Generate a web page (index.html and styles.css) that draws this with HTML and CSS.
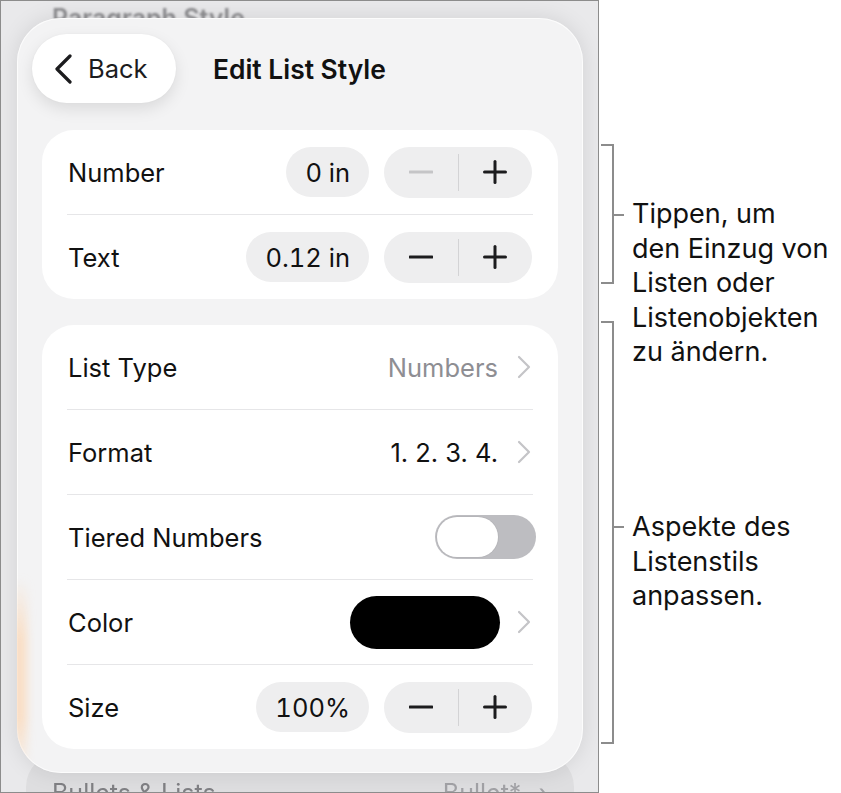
FILE: index.html
```html
<!DOCTYPE html>
<html lang="de">
<head>
<meta charset="utf-8">
<title>Edit List Style</title>
<link rel="stylesheet" href="styles.css">
</head>
<body>
<div class="page">
  <div class="device">
    <div class="bg-top">Paragraph Style</div>
    <div class="bg-sheet">
      <span class="bg-sheet-label">Bullets &amp; Lists</span>
      <span class="bg-sheet-value">Bullet* <span class="bg-chev">›</span></span>
    </div>

    <div class="panel">
      <div class="panel-glow"></div>
      <div class="header">
        <button class="back">
          <svg class="back-chev" width="20" height="30" viewBox="0 0 20 30"><polyline points="17,2 4,15 17,28" fill="none" stroke="#1c1c1e" stroke-width="3.2" stroke-linecap="round" stroke-linejoin="round"/></svg>
          <span>Back</span>
        </button>
        <h1 class="title">Edit List Style</h1>
      </div>

      <div class="card">
        <div class="row">
          <span class="label">Number</span>
          <div class="controls">
            <span class="value-pill">0 in</span>
            <div class="stepper">
              <span class="step"><svg width="24" height="24" viewBox="0 0 24 24"><line x1="1" y1="12" x2="23" y2="12" stroke="#c5c5c7" stroke-width="3" stroke-linecap="round"/></svg></span>
              <span class="step-div"></span>
              <span class="step"><svg width="24" height="24" viewBox="0 0 24 24"><line x1="1.5" y1="12" x2="22.5" y2="12" stroke="#1c1c1e" stroke-width="3" stroke-linecap="round"/><line x1="12" y1="1.5" x2="12" y2="22.5" stroke="#1c1c1e" stroke-width="3" stroke-linecap="round"/></svg></span>
            </div>
          </div>
        </div>
        <div class="row">
          <span class="label">Text</span>
          <div class="controls">
            <span class="value-pill">0.12 in</span>
            <div class="stepper">
              <span class="step"><svg width="24" height="24" viewBox="0 0 24 24"><line x1="1" y1="12" x2="23" y2="12" stroke="#1c1c1e" stroke-width="3" stroke-linecap="round"/></svg></span>
              <span class="step-div"></span>
              <span class="step"><svg width="24" height="24" viewBox="0 0 24 24"><line x1="1.5" y1="12" x2="22.5" y2="12" stroke="#1c1c1e" stroke-width="3" stroke-linecap="round"/><line x1="12" y1="1.5" x2="12" y2="22.5" stroke="#1c1c1e" stroke-width="3" stroke-linecap="round"/></svg></span>
            </div>
          </div>
        </div>
      </div>

      <div class="card card-2">
        <div class="row">
          <span class="label">List Type</span>
          <div class="controls">
            <span class="value muted">Numbers</span>
            <svg class="chev" width="14" height="24" viewBox="0 0 14 24"><polyline points="2,2 12,12 2,22" fill="none" stroke="#c4c4c7" stroke-width="2.2" stroke-linecap="round" stroke-linejoin="round"/></svg>
          </div>
        </div>
        <div class="row">
          <span class="label">Format</span>
          <div class="controls">
            <span class="value">1. 2. 3. 4.</span>
            <svg class="chev" width="14" height="24" viewBox="0 0 14 24"><polyline points="2,2 12,12 2,22" fill="none" stroke="#c4c4c7" stroke-width="2.2" stroke-linecap="round" stroke-linejoin="round"/></svg>
          </div>
        </div>
        <div class="row">
          <span class="label">Tiered Numbers</span>
          <div class="controls">
            <span class="toggle"><span class="knob"></span></span>
          </div>
        </div>
        <div class="row">
          <span class="label">Color</span>
          <div class="controls">
            <span class="swatch"></span>
            <svg class="chev chev-color" width="14" height="24" viewBox="0 0 14 24"><polyline points="2,2 12,12 2,22" fill="none" stroke="#c4c4c7" stroke-width="2.2" stroke-linecap="round" stroke-linejoin="round"/></svg>
          </div>
        </div>
        <div class="row">
          <span class="label">Size</span>
          <div class="controls">
            <span class="value-pill">100%</span>
            <div class="stepper">
              <span class="step"><svg width="24" height="24" viewBox="0 0 24 24"><line x1="1" y1="12" x2="23" y2="12" stroke="#1c1c1e" stroke-width="3" stroke-linecap="round"/></svg></span>
              <span class="step-div"></span>
              <span class="step"><svg width="24" height="24" viewBox="0 0 24 24"><line x1="1.5" y1="12" x2="22.5" y2="12" stroke="#1c1c1e" stroke-width="3" stroke-linecap="round"/><line x1="12" y1="1.5" x2="12" y2="22.5" stroke="#1c1c1e" stroke-width="3" stroke-linecap="round"/></svg></span>
            </div>
          </div>
        </div>
      </div>
    </div>
  </div>

  <div class="notes">
    <div class="note note-1">
      <span class="bracket"></span>
      <p class="note-text">Tippen, um<br>den Einzug von<br>Listen oder<br>Listenobjekten<br>zu ändern.</p>
    </div>
    <div class="note note-2">
      <span class="bracket"></span>
      <p class="note-text">Aspekte des<br>Listenstils<br>anpassen.</p>
    </div>
  </div>
</div>
</body>
</html>
```

FILE: styles.css
```css
* { box-sizing: border-box; }

html, body {
  margin: 0;
  padding: 0;
  background: #ffffff;
}

body {
  font-family: Inter, "Liberation Sans", Arial, sans-serif;
  color: #111111;
}

.page {
  display: flex;
  width: 841px;
  height: 793px;
  overflow: hidden;
}

.device {
  position: relative;
  width: 599px;
  height: 793px;
  flex: none;
  border: 1px solid #8c8c8c;
  background: #e9e9eb;
  overflow: hidden;
}

.bg-top {
  position: absolute;
  left: 51px;
  top: 2px;
  font-size: 25px;
  font-weight: 600;
  color: #8d8d90;
  filter: blur(0.8px);
}

.bg-sheet {
  position: absolute;
  left: 25px;
  right: 24px;
  top: 752px;
  height: 90px;
  border-radius: 34px;
  background: #dedee0;
  display: flex;
  justify-content: space-between;
  padding: 25px 26px 0 26px;
  font-size: 25px;
  color: #808084;
  filter: blur(0.6px);
}

.bg-sheet-value { color: #a2a2a6; }
.bg-chev { margin-left: 10px; }

.panel {
  position: absolute;
  left: 16px;
  top: 17px;
  width: 566px;
  height: 755px;
  border-radius: 44px;
  background: #f3f3f4;
  box-shadow: 0 0 22px rgba(0, 0, 0, 0.10), inset 0 0 0 1px rgba(255, 255, 255, 0.7);
  padding: 16px 25px 0 25px;
  overflow: hidden;
}

.panel-glow {
  position: absolute;
  left: -6px;
  top: 560px;
  width: 16px;
  height: 200px;
  background: linear-gradient(to bottom, rgba(255, 214, 170, 0), rgba(255, 206, 160, 0.55) 30%, rgba(255, 206, 160, 0.55) 70%, rgba(255, 214, 170, 0));
  filter: blur(4px);
}

.header {
  position: relative;
  display: flex;
  align-items: center;
  height: 69px;
  margin-left: -10px;
  margin-bottom: 27px;
}

.back {
  display: flex;
  align-items: center;
  gap: 15px;
  width: 144px;
  height: 69px;
  padding: 0 0 0 21px;
  border: none;
  border-radius: 35px;
  background: #ffffff;
  box-shadow: 0 6px 16px rgba(0, 0, 0, 0.10), 0 0 2px rgba(0, 0, 0, 0.04);
  font-family: inherit;
  font-size: 25.5px;
  color: #1c1c1e;
}

.back-chev { flex: none; }

.title {
  margin: 0 0 0 37px;
  font-size: 26.4px;
  font-weight: 600;
  color: #111111;
}

.card {
  position: relative;
  background: #ffffff;
  border-radius: 32px;
}

.card-2 { margin-top: 26px; }

.row {
  display: flex;
  align-items: center;
  justify-content: space-between;
  height: 85px;
  margin: 0 25px;
  border-bottom: 1px solid #e6e6e8;
}

.row:last-child {
  height: 84px;
  border-bottom: none;
}

.label {
  font-size: 25.5px;
  color: #111111;
  padding-left: 1px;
}

.controls {
  display: flex;
  align-items: center;
}

.value-pill {
  display: flex;
  align-items: center;
  height: 50px;
  padding: 0 19px;
  border-radius: 25px;
  background: #eeeeef;
  font-size: 25.5px;
  font-variant-numeric: tabular-nums;
  color: #111111;
  margin-right: 15px;
}

.stepper {
  display: flex;
  align-items: center;
  width: 148px;
  height: 51px;
  border-radius: 26px;
  background: #eeeeef;
  margin-right: 1px;
}

.step {
  flex: 1;
  display: flex;
  align-items: center;
  justify-content: center;
}

.step svg { display: block; }

.step-div {
  width: 1px;
  height: 37px;
  background: #d3d3d5;
}

.value {
  font-size: 25.5px;
  color: #111111;
}

.muted { color: #8e8e93; }

.chev {
  display: block;
  margin-left: 19px;
  margin-right: 2px;
}

.chev-color { margin-left: 17px; }

.toggle {
  position: relative;
  display: block;
  width: 101px;
  height: 44px;
  border-radius: 22px;
  background: #bdbdc1;
  margin-right: -3px;
}

.knob {
  position: absolute;
  left: 2px;
  top: 2px;
  width: 61px;
  height: 40px;
  border-radius: 20px;
  background: #ffffff;
  box-shadow: 0 0 0 1px rgba(0, 0, 0, 0.04);
}

.swatch {
  display: block;
  width: 150px;
  height: 53px;
  border-radius: 27px;
  background: #000000;
}

.notes {
  display: flex;
  flex-direction: column;
  padding-top: 144px;
  width: 242px;
}

.note {
  display: flex;
  align-items: flex-start;
}

.note-1 { height: 140px; }
.note-2 { height: 423px; margin-top: 37px; }

.bracket {
  position: relative;
  flex: none;
  width: 13px;
  height: 100%;
  margin-left: 2px;
  border: 2px solid #8c8c8c;
  border-left: none;
}

.bracket::after {
  content: "";
  position: absolute;
  left: 100%;
  width: 12px;
  height: 2px;
  background: #8c8c8c;
}

.note-1 .bracket::after { top: 68px; }
.note-2 .bracket::after { top: 203px; }

.note-text {
  margin: 0 0 0 18px;
  font-size: 27px;
  line-height: 34.5px;
  color: #111111;
  white-space: nowrap;
}

.note-1 .note-text { margin-top: 53px; }
.note-2 .note-text { margin-top: 189px; }
```
